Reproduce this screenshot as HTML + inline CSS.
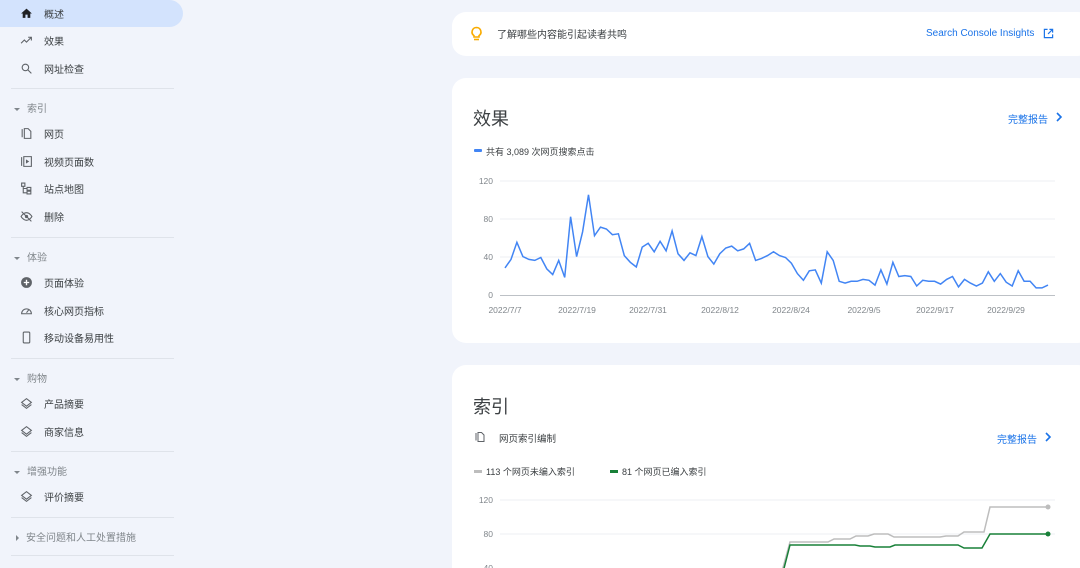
<!DOCTYPE html>
<html style="overflow:hidden;height:568px"><head><meta charset="utf-8"><style>
*{margin:0;padding:0;box-sizing:border-box}
body{width:1080px;height:568px;overflow:hidden;background:#f1f4fb;font-family:"Liberation Sans","Noto Sans CJK SC",sans-serif;position:relative;color:#3c4043}
.nav{position:absolute;left:0;top:0;width:183px}
.it{position:absolute;left:0;height:27px;width:183px;font-size:10px;color:#3c4043;display:flex;align-items:center}
.it svg{position:absolute;left:20px;width:13px;height:13px}
.it span{position:absolute;left:44px}
.act{background:#d3e3fd;border-radius:0 14px 14px 0}
.sec{position:absolute;left:14px;font-size:10px;color:#80868b}
.sec b{display:inline-block;width:0;height:0;border-left:3px solid transparent;border-right:3px solid transparent;border-top:3px solid #80868b;margin-right:7px;vertical-align:middle}
.sec b.r{border-top:3px solid transparent;border-bottom:3px solid transparent;border-left:3px solid #80868b;border-right:0;margin-left:2px}
.hr{position:absolute;left:11px;width:163px;height:1px;background:#dfe3ea}
.card{position:absolute;left:452px;width:640px;background:#fff;border-radius:14px}
.blue{color:#1a73e8}
</style></head><body>
<div class="nav">
<div class="it act" style="top:0"><svg viewBox="0 0 24 24"><path d="M10 20v-6h4v6h5v-8h3L12 3 2 12h3v8z" fill="#202124"/></svg><span>概述</span></div>
<div class="it" style="top:27px"><svg viewBox="0 0 24 24"><path d="M2 17l6-6 4 4 8-8M15 6h6v6" stroke="#5f6368" stroke-width="2" fill="none"/></svg><span>效果</span></div>
<div class="it" style="top:55px"><svg viewBox="0 0 24 24"><circle cx="10" cy="10" r="6" stroke="#5f6368" stroke-width="2" fill="none"/><path d="M14.5 14.5L21 21" stroke="#5f6368" stroke-width="2"/></svg><span>网址检查</span></div>
<div class="hr" style="top:88px"></div>
<div class="sec" style="top:100px"><b></b>索引</div>
<div class="it" style="top:120px"><svg viewBox="0 0 24 24"><path d="M4 4v15M8 3h7l5 5v13H8z" stroke="#5f6368" stroke-width="2" fill="none"/></svg><span>网页</span></div>
<div class="it" style="top:148px"><svg viewBox="0 0 24 24"><path d="M3 4v16M7 3h14v18H7z" stroke="#5f6368" stroke-width="2" fill="none"/><path d="M11 8l6 4-6 4z" fill="#5f6368"/></svg><span>视频页面数</span></div>
<div class="it" style="top:175px"><svg viewBox="0 0 24 24"><path d="M3 2h6v6H3zM13 10h7v5h-7zM13 17h7v5h-7zM6 8v12h7M6 12h7" stroke="#5f6368" stroke-width="2" fill="none"/></svg><span>站点地图</span></div>
<div class="it" style="top:203px"><svg viewBox="0 0 24 24"><path d="M2 12s4-7 10-7 10 7 10 7-4 7-10 7S2 12 2 12z" stroke="#5f6368" stroke-width="2" fill="none"/><circle cx="12" cy="12" r="3" fill="#5f6368"/><path d="M3 3l18 18" stroke="#5f6368" stroke-width="2"/></svg><span>删除</span></div>
<div class="hr" style="top:237px"></div>
<div class="sec" style="top:249px"><b></b>体验</div>
<div class="it" style="top:269px"><svg viewBox="0 0 24 24"><circle cx="12" cy="12" r="10" fill="#5f6368"/><path d="M12 7v10M7 12h10" stroke="#fff" stroke-width="2.5"/></svg><span>页面体验</span></div>
<div class="it" style="top:297px"><svg viewBox="0 0 24 24"><path d="M3 18a9 9 0 1 1 18 0z" stroke="#5f6368" stroke-width="2" fill="none"/><path d="M12 16l4-5" stroke="#5f6368" stroke-width="2"/></svg><span>核心网页指标</span></div>
<div class="it" style="top:324px"><svg viewBox="0 0 24 24"><rect x="6" y="2" width="12" height="20" rx="2" stroke="#5f6368" stroke-width="2" fill="none"/></svg><span>移动设备易用性</span></div>
<div class="hr" style="top:358px"></div>
<div class="sec" style="top:370px"><b></b>购物</div>
<div class="it" style="top:390px"><svg viewBox="0 0 24 24"><path d="M12 3l9 7-9 7-9-7zM3 14l9 7 9-7" stroke="#5f6368" stroke-width="2" fill="none"/></svg><span>产品摘要</span></div>
<div class="it" style="top:418px"><svg viewBox="0 0 24 24"><path d="M12 3l9 7-9 7-9-7zM3 14l9 7 9-7" stroke="#5f6368" stroke-width="2" fill="none"/></svg><span>商家信息</span></div>
<div class="hr" style="top:451px"></div>
<div class="sec" style="top:463px"><b></b>增强功能</div>
<div class="it" style="top:483px"><svg viewBox="0 0 24 24"><path d="M12 3l9 7-9 7-9-7zM3 14l9 7 9-7" stroke="#5f6368" stroke-width="2" fill="none"/></svg><span>评价摘要</span></div>
<div class="hr" style="top:517px"></div>
<div class="sec" style="top:529px"><b class="r"></b>安全问题和人工处置措施</div>
<div class="hr" style="top:555px"></div>
</div>

<div class="card" style="top:12px;height:44px">
<svg style="position:absolute;left:18px;top:14px" width="13" height="16" viewBox="0 0 13 16"><path d="M6.5 1.5a4.5 4.5 0 0 0-2.5 8.2V11h5V9.7a4.5 4.5 0 0 0-2.5-8.2z" stroke="#f9ab00" stroke-width="1.6" fill="none"/><path d="M4 13.5h5" stroke="#f9ab00" stroke-width="1.6"/></svg>
<div style="position:absolute;left:45px;top:14px;font-size:10px;color:#3c4043">了解哪些内容能引起读者共鸣</div>
<div class="blue" style="position:absolute;left:474px;top:16px;font-size:10px;line-height:12px">Search Console Insights</div>
<svg style="position:absolute;left:591px;top:16px" width="11" height="11" viewBox="0 0 24 24"><path d="M10 3H3v18h18v-7M14 3h7v7M21 3L11 13" stroke="#1a73e8" stroke-width="2.6" fill="none"/></svg>
</div>

<div class="card" style="top:78px;height:265px">
<div style="position:absolute;left:21px;top:27px;font-size:18px;color:#3c4043">效果</div>
<div class="blue" style="position:absolute;left:556px;top:33px;font-size:10px">完整报告</div>
<svg style="position:absolute;left:603px;top:33px" width="8" height="12" viewBox="0 0 8 12"><path d="M2 2l4 4-4 4" stroke="#1a73e8" stroke-width="1.6" fill="none"/></svg>
<div style="position:absolute;left:22px;top:71px;width:8px;height:3px;background:#4285f4;border-radius:1px"></div>
<div style="position:absolute;left:34px;top:67px;font-size:9px;color:#3c4043">共有 3,089 次网页搜索点击</div>
</div>

<svg style="position:absolute;left:0;top:0" width="1080" height="568">
<g stroke="#eceff3" stroke-width="1"><line x1="500" y1="181" x2="1055" y2="181"/><line x1="500" y1="219" x2="1055" y2="219"/><line x1="500" y1="257" x2="1055" y2="257"/></g>
<line x1="500" y1="295.5" x2="1055" y2="295.5" stroke="#bdc1c6"/>
<g font-size="8.5" fill="#80868b" font-family="Liberation Sans" text-anchor="end"><text x="493" y="184">120</text><text x="493" y="222">80</text><text x="493" y="260">40</text><text x="493" y="298">0</text></g>
<g font-size="8.5" fill="#80868b" font-family="Liberation Sans" text-anchor="middle"><text x="505" y="313">2022/7/7</text><text x="577" y="313">2022/7/19</text><text x="648" y="313">2022/7/31</text><text x="720" y="313">2022/8/12</text><text x="791" y="313">2022/8/24</text><text x="864" y="313">2022/9/5</text><text x="935" y="313">2022/9/17</text><text x="1006" y="313">2022/9/29</text></g>
<polyline id="p" fill="none" stroke="#4285f4" stroke-width="1.5" points=""/>
<g stroke="#eceff3"><line x1="500" y1="500" x2="1055" y2="500"/><line x1="500" y1="534" x2="1055" y2="534"/></g>
<g font-size="8.5" fill="#80868b" font-family="Liberation Sans" text-anchor="end"><text x="493" y="503">120</text><text x="493" y="537">80</text><text x="493" y="571">40</text></g>
<polyline fill="none" stroke="#bdbdbd" stroke-width="1.5" points="781,575 790,542 828,542 834,539 850,539 856,536 868,536 874,534 888,534 894,537 940,537 946,536 958,536 964,532 978,532 984,532 990,507 1048,507"/>
<circle cx="1048" cy="507" r="2.5" fill="#bdbdbd"/>
<polyline fill="none" stroke="#188038" stroke-width="1.5" points="781,580 790,545 855,545 860,546 870,546 875,547 890,547 895,545 958,545 964,548 982,548 990,534 1048,534"/>
<circle cx="1048" cy="534" r="2.5" fill="#188038"/>
</svg>

<div class="card" style="top:365px;height:203px;z-index:-1;border-radius:14px 14px 0 0">
<div style="position:absolute;left:21px;top:28px;font-size:18px;color:#3c4043">索引</div>
<svg style="position:absolute;left:22px;top:65px" width="12" height="14" viewBox="0 0 24 24"><path d="M4 4v15M8 3h7l5 5v13H8z" stroke="#5f6368" stroke-width="2" fill="none"/></svg>
<div style="position:absolute;left:47px;top:66px;font-size:9.5px;color:#3c4043">网页索引编制</div>
<div class="blue" style="position:absolute;left:545px;top:66px;font-size:10px">完整报告</div>
<svg style="position:absolute;left:592px;top:66px" width="8" height="12" viewBox="0 0 8 12"><path d="M2 2l4 4-4 4" stroke="#1a73e8" stroke-width="1.6" fill="none"/></svg>
<div style="position:absolute;left:22px;top:105px;width:8px;height:3px;background:#bdbdbd"></div>
<div style="position:absolute;left:34px;top:100px;font-size:9px">113 个网页未编入索引</div>
<div style="position:absolute;left:158px;top:105px;width:8px;height:3px;background:#188038"></div>
<div style="position:absolute;left:170px;top:100px;font-size:9px">81 个网页已编入索引</div>
</div>
<script>
var v=[29,38,56,41,38,37,40,28,22,37,19,83,41,67,106,63,72,70,64,65,42,35,30,51,55,46,57,47,68,44,37,45,42,62,41,33,44,50,52,47,49,55,37,39,42,46,42,40,34,23,16,26,27,13,46,37,15,13,15,15,17,16,11,27,12,35,20,21,20,10,16,15,15,12,17,20,9,17,13,10,13,25,15,23,14,10,26,15,15,8,8,11];
var s=[];for(var i=0;i<v.length;i++){s.push((505+i*543/(v.length-1)).toFixed(1)+','+(295.5-v[i]*0.95).toFixed(1));}
document.getElementById('p').setAttribute('points',s.join(' '));
</script>
</body></html>
